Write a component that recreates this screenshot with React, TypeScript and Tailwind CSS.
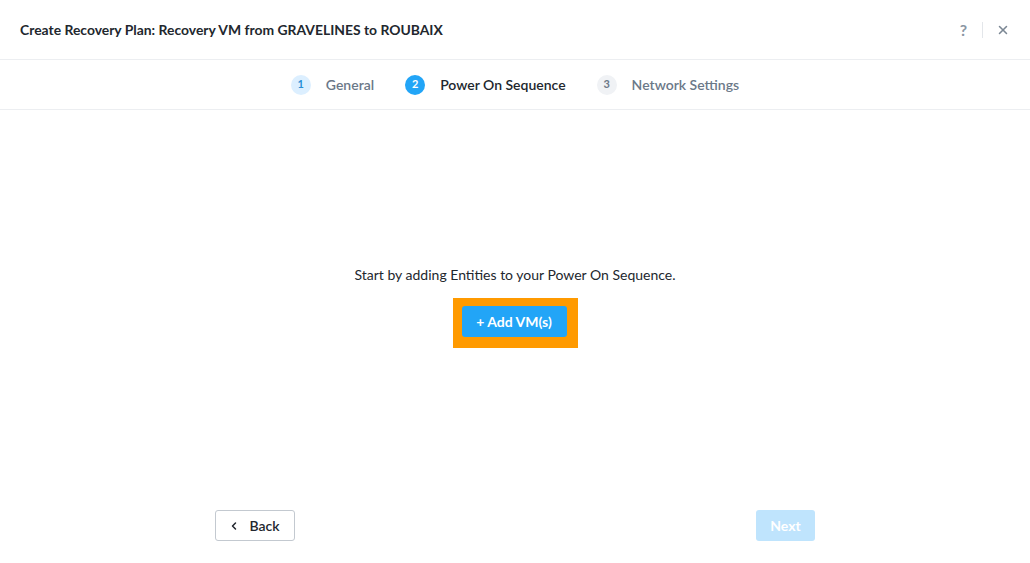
import { X, ChevronLeft } from 'lucide-react';

const font = { fontFamily: 'Lato, "Liberation Sans", sans-serif' };

function Step({ n, label, state }: { n: number; label: string; state: 'done' | 'active' | 'todo' }) {
    const circle =
        state === 'active'
            ? 'bg-[#22a5f7] text-white'
            : state === 'done'
            ? 'bg-[#dcefff] text-[#2a8fd6]'
            : 'bg-[#f0f2f5] text-[#6b7888]';
    return (
        <div className="flex items-center gap-[15px]">
            <span className={`flex h-5 w-5 items-center justify-center rounded-full text-[11px] font-bold ${circle}`}>{n}</span>
            <span className={`text-[14px] font-semibold ${state === 'active' ? 'text-[#22272e]' : 'text-[#6b7888]'}`}>{label}</span>
        </div>
    );
}

export default function App() {
    return (
        <div className="flex h-[563px] w-[1030px] flex-col bg-white" style={font}>
            {/* Header */}
            <div className="flex h-[60px] items-center justify-between border-b border-[#eceef1] pl-5 pr-[20px] pt-[1px]">
                <h1 className="text-[13.9px] font-bold text-[#22272e]">Create Recovery Plan: Recovery VM from GRAVELINES to ROUBAIX</h1>
                <div className="flex items-center">
                    <span className="text-[16px] font-bold text-[#8a96a3]">?</span>
                    <span className="ml-[15px] mr-[13px] h-4 w-px bg-[#e3e6ea]" />
                    <X className="h-[14px] w-[14px] text-[#7b8794]" strokeWidth={2.6} />
                </div>
            </div>

            {/* Steps */}
            <div className="flex h-[50px] items-center justify-center gap-[31px] border-b border-[#eceef1]">
                <Step n={1} label="General" state="done" />
                <Step n={2} label="Power On Sequence" state="active" />
                <Step n={3} label="Network Settings" state="todo" />
            </div>

            {/* Body */}
            <div className="flex flex-1 flex-col items-center pt-[156px]">
                <p className="text-[14px] leading-[18px] text-[#22272e]">Start by adding Entities to your Power On Sequence.</p>
                <div className="mt-[14px] bg-[#ff9a00] pb-[11px] pl-[9px] pr-[11px] pt-[8px]">
                    <button className="h-[31px] w-[105px] rounded-[3px] bg-[#22a5f7] text-[14px] font-bold text-white">+ Add VM(s)</button>
                </div>
            </div>

            {/* Footer */}
            <div className="flex h-[53px] items-start justify-between pl-[215px] pr-[215px]">
                <button className="flex h-[31px] w-[80px] items-center justify-center gap-[9px] rounded-[3px] border border-[#c3c9d0] pr-[2px] text-[14px] font-semibold text-[#22272e]">
                    <ChevronLeft className="h-3 w-3" strokeWidth={3} />
                    Back
                </button>
                <button className="h-[31px] w-[59px] rounded-[3px] bg-[#bfe4fd] text-[14px] font-bold text-white">Next</button>
            </div>
        </div>
    );
}
